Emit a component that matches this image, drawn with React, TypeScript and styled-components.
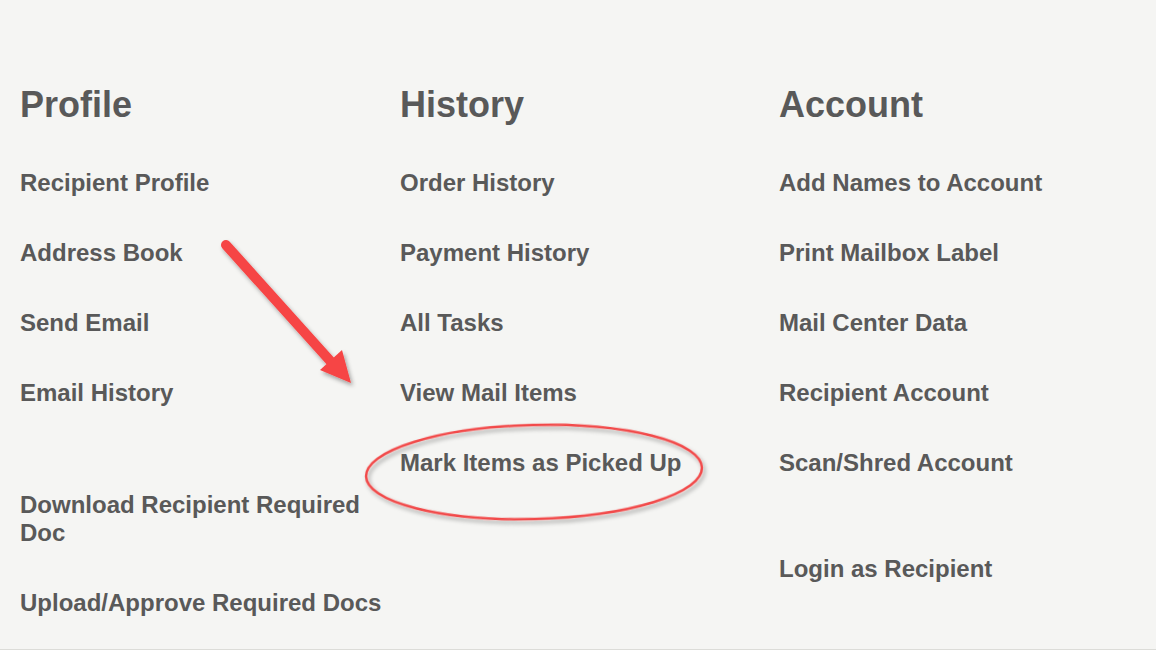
import * as React from "react";
import styled, { createGlobalStyle } from "styled-components";

const GlobalStyle = createGlobalStyle`
  html, body {
    margin: 0;
    padding: 0;
    background: #ffffff;
  }
  body {
    font-family: "Liberation Sans", Arial, sans-serif;
  }
`;

const Page = styled.div`
  position: relative;
  height: 649px;
  background: #f5f5f3;
  border-bottom: 1px solid #dcdcd8;
  box-sizing: content-box;
  overflow: hidden;
`;

const Columns = styled.div`
  display: grid;
  grid-template-columns: 380px 379px 377px;
  padding: 85px 0 0 20px;
`;

const Column = styled.div`
  display: flex;
  flex-direction: column;
  padding-right: 10px;
`;

const Heading = styled.h2`
  margin: 0 0 44px;
  font-size: 36px;
  line-height: 40px;
  font-weight: 700;
  color: #595959;
`;

const Link = styled.a<{ $extra?: number }>`
  display: block;
  margin: ${(p) => p.$extra ?? 0}px 0 42px;
  font-size: 24px;
  line-height: 28px;
  font-weight: 700;
  color: #595959;
  text-decoration: none;
  cursor: pointer;
`;

const Overlay = styled.svg`
  position: absolute;
  left: 0;
  top: 0;
  pointer-events: none;
`;

interface Item {
  label: string;
  extra?: number;
}

const columns: { title: string; items: Item[] }[] = [
  {
    title: "Profile",
    items: [
      { label: "Recipient Profile" },
      { label: "Address Book" },
      { label: "Send Email" },
      { label: "Email History" },
      { label: "Download Recipient Required Doc", extra: 42 },
      { label: "Upload/Approve Required Docs" },
    ],
  },
  {
    title: "History",
    items: [
      { label: "Order History" },
      { label: "Payment History" },
      { label: "All Tasks" },
      { label: "View Mail Items" },
      { label: "Mark Items as Picked Up" },
    ],
  },
  {
    title: "Account",
    items: [
      { label: "Add Names to Account" },
      { label: "Print Mailbox Label" },
      { label: "Mail Center Data" },
      { label: "Recipient Account" },
      { label: "Scan/Shred Account" },
      { label: "Login as Recipient", extra: 36 },
    ],
  },
];

function Annotations() {
  return (
    <Overlay width={1156} height={649} viewBox="0 0 1156 649">
      <defs>
        <filter id="shadow" x="-20%" y="-20%" width="140%" height="140%">
          <feDropShadow dx="2" dy="3" stdDeviation="2" floodColor="#000" floodOpacity="0.35" />
        </filter>
      </defs>
      <g filter="url(#shadow)">
        <line x1={226} y1={245} x2={333} y2={364} stroke="#f64444" strokeWidth={10} strokeLinecap="round" />
        <polygon points="351,383 320,370 342,350" fill="#f64444" />
      </g>
      <ellipse
        cx={534}
        cy={472}
        rx={168}
        ry={47}
        fill="none"
        stroke="#f24a4a"
        strokeWidth={2.5}
        transform="rotate(-1.5 534 472)"
        filter="url(#shadow)"
      />
    </Overlay>
  );
}

export default function App() {
  return (
    <>
      <GlobalStyle />
      <Page>
        <Columns>
          {columns.map((col) => (
            <Column key={col.title}>
              <Heading>{col.title}</Heading>
              {col.items.map((item) => (
                <Link key={item.label} $extra={item.extra}>
                  {item.label}
                </Link>
              ))}
            </Column>
          ))}
        </Columns>
        <Annotations />
      </Page>
    </>
  );
}
